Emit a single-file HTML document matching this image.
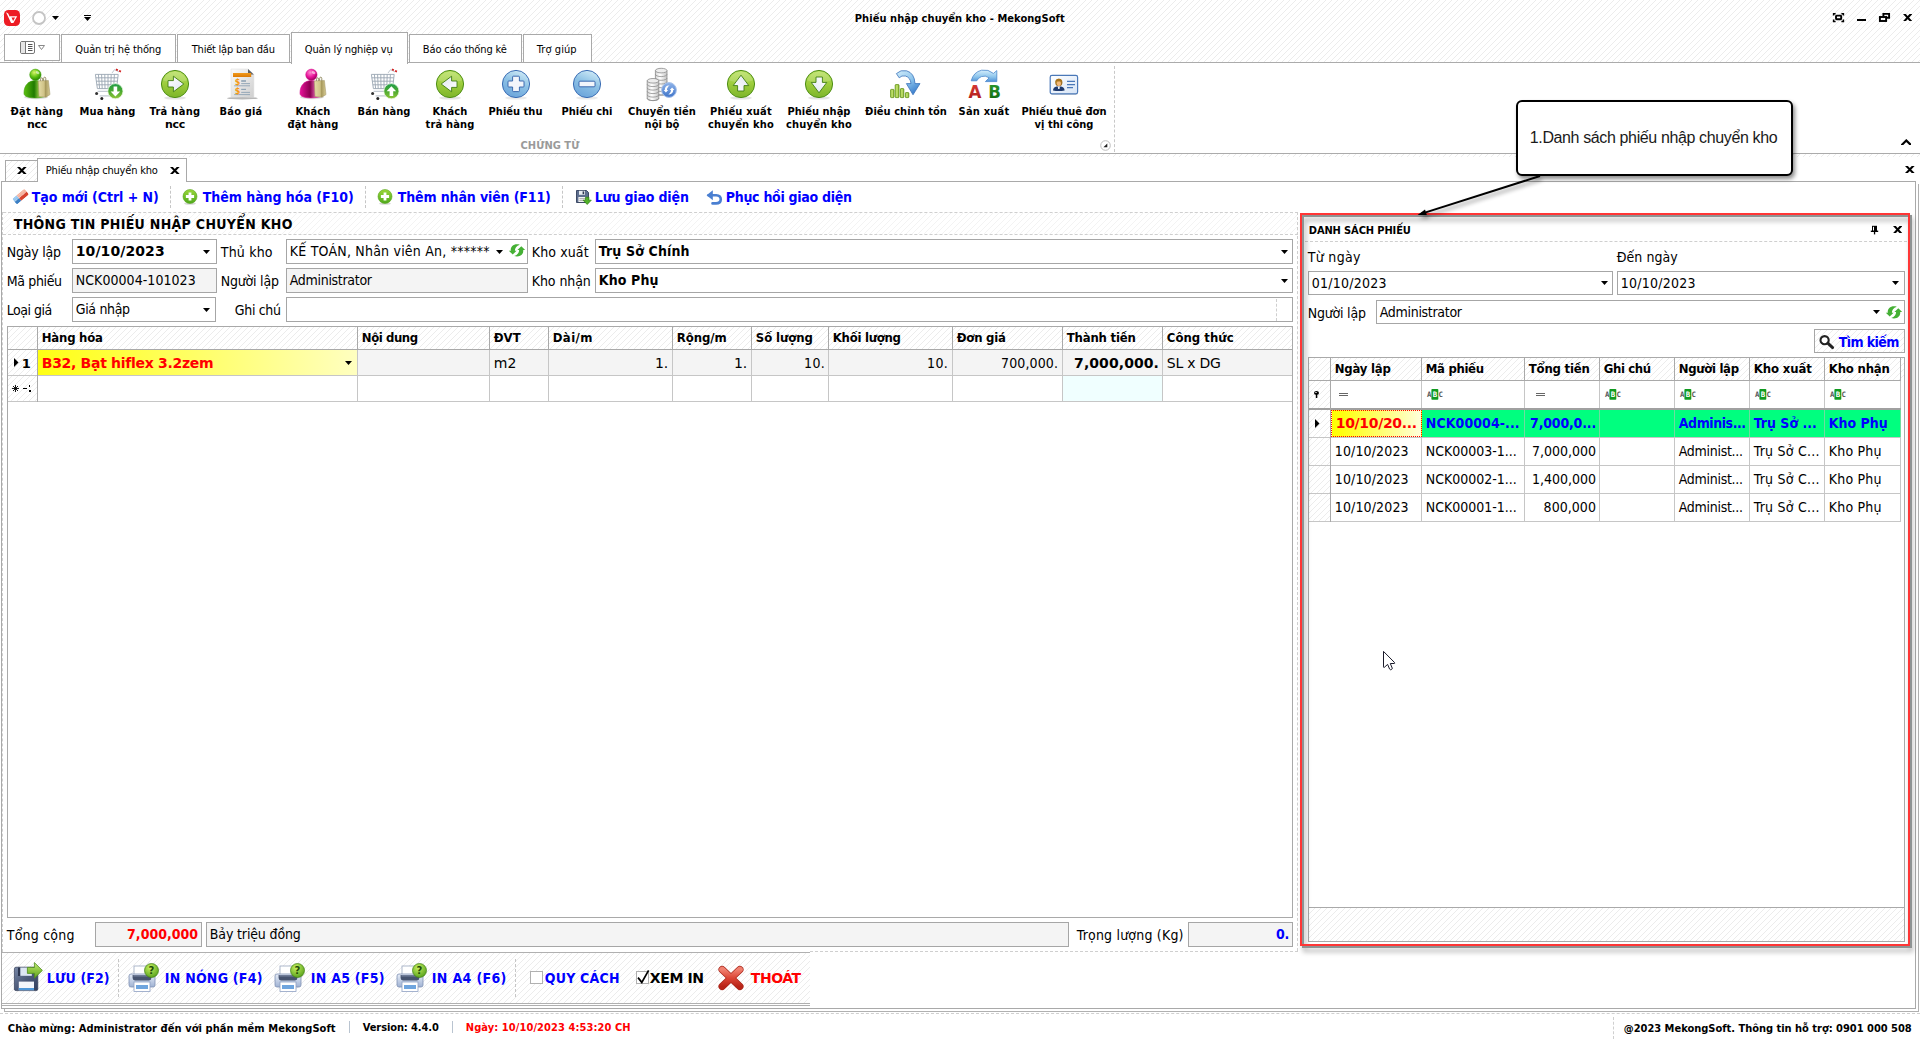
<!DOCTYPE html>
<html lang="vi"><head><meta charset="utf-8"><title>Phiếu nhập chuyển kho - MekongSoft</title>
<style>
html,body{margin:0;padding:0}
body{width:1920px;height:1039px;position:relative;overflow:hidden;background:#fff;font-family:"DejaVu Sans Condensed","Liberation Sans",sans-serif;font-size:11px;color:#000}
.t{position:absolute;white-space:pre;line-height:20px;height:20px}
.b{position:absolute;box-sizing:border-box}
.h{background-color:#fff;background-image:repeating-linear-gradient(135deg,#ececec 0,#ececec .65px,rgba(255,255,255,0) .65px,rgba(255,255,255,0) 4.2426px)}
svg{position:absolute;overflow:visible}
.h2{background-color:#fff;background-image:repeating-linear-gradient(135deg,#f3f3f3 0,#f3f3f3 .7px,rgba(255,255,255,0) .7px,rgba(255,255,255,0) 4.2426px)}

</style></head>
<body>
<div class="b h" style="left:0px;top:0px;width:1920px;height:62px;"></div>
<div class="b" style="left:0px;top:62px;width:1920px;height:1px;background:#ababab;"></div>
<svg style="left:4px;top:10px" width="16" height="16" viewBox="0 0 16 16"><rect x="0" y="0" width="16" height="16" rx="4.5" fill="#ed1c24"/><path d="M2 2.2L4.2 3.4L8.6 12.8H7Z" fill="#fff"/><path d="M5.4 6.2H13.2L9.4 13H7.2Z" fill="#fff"/><path d="M7.5 7.5H11.1L9.1 11.1Z" fill="#ed1c24"/></svg>
<svg style="left:31px;top:10px" width="16" height="16" viewBox="0 0 16 16"><circle cx="8" cy="8" r="6" fill="#fff" stroke="#c4c4c4" stroke-width="1.8"/></svg>
<svg style="left:52px;top:16px" width="8" height="5" viewBox="0 0 8 5"><path d="M0 0H7L3.5 4Z" fill="#000"/></svg>
<svg style="left:84px;top:14px" width="8" height="8" viewBox="0 0 8 8"><rect x="0" y="1" width="7" height="1" fill="#000"/><path d="M0 3H7L3.5 7Z" fill="#000"/></svg>
<span class="t" style="left:854.80px;top:9.00px;font-size:11px;font-weight:700;letter-spacing:0.057px;">Phiếu nhập chuyển kho - MekongSoft</span>
<svg style="left:1832px;top:12px" width="13" height="11" viewBox="0 0 13 11" fill="none" stroke="#000"><path d="M1.6 3.6V1.8H3.6M9.4 1.8H11.4V3.6M11.4 7.6V9.4H9.4M3.6 9.4H1.6V7.6" stroke-width="1.5"/><rect x="4" y="3.6" width="5.2" height="3.6" rx="0.6" stroke-width="1.9"/></svg>
<div class="b" style="left:1857px;top:19px;width:9px;height:2px;background:#000;"></div>
<svg style="left:1878px;top:12px" width="13" height="11" viewBox="0 0 13 11" fill="none" stroke="#000" stroke-width="1.9"><path d="M5.4 4V1.9H11.1V5.8H8.6"/><rect x="1.9" y="5" width="6.2" height="4" /></svg>
<svg style="left:1903px;top:14px;overflow:hidden" width="9.4" height="7.2" viewBox="0 0 9.4 7.2" stroke="#000" stroke-width="2.1"><path d="M-0.43 -2L9.83 9.2M9.83 -2L-0.43 9.2"/></svg>
<div class="b" style="left:4px;top:34px;width:56px;height:27px;background:#fff;border:1px solid #a9a9a9;"></div>
<svg style="left:20px;top:41px" width="28" height="14" viewBox="0 0 28 14" fill="none"><rect x="0.5" y="0.5" width="14" height="12" rx="1.5" stroke="#777" fill="#fff"/><rect x="1" y="1" width="4" height="11" fill="#e6e6e6"/><path d="M5.5 0.5V12.5" stroke="#777"/><path d="M8 3.5H12.5M8 5.5H12.5M8 7.5H12.5M8 9.5H12.5" stroke="#555"/><path d="M18.5 4.5H24.5L21.5 8.5Z" stroke="#888" fill="#fff"/></svg>
<div class="b" style="left:61px;top:34px;width:115px;height:28px;background:#fff;border:1px solid #a9a9a9;border-bottom:none;"></div>
<span class="t" style="left:75.30px;top:40.00px;font-size:11px;letter-spacing:-0.103px;">Quản trị hệ thống</span>
<div class="b" style="left:177px;top:34px;width:113px;height:28px;background:#fff;border:1px solid #a9a9a9;border-bottom:none;"></div>
<span class="t" style="left:191.80px;top:40.00px;font-size:11px;letter-spacing:-0.230px;">Thiết lập ban đầu</span>
<div class="b" style="left:291px;top:32px;width:117px;height:32px;background:#fff;border:1px solid #a9a9a9;border-bottom:none;"></div>
<span class="t" style="left:304.80px;top:40.00px;font-size:11px;letter-spacing:-0.154px;">Quản lý nghiệp vụ</span>
<div class="b" style="left:409px;top:34px;width:113px;height:28px;background:#fff;border:1px solid #a9a9a9;border-bottom:none;"></div>
<span class="t" style="left:422.80px;top:40.00px;font-size:11px;letter-spacing:-0.137px;">Báo cáo thống kê</span>
<div class="b" style="left:523px;top:34px;width:69px;height:28px;background:#fff;border:1px solid #a9a9a9;border-bottom:none;"></div>
<span class="t" style="left:536.80px;top:40.00px;font-size:11px;letter-spacing:0.077px;">Trợ giúp</span>
<div class="b" style="left:0px;top:153px;width:1920px;height:1px;background:#ababab;"></div>
<div class="b h" style="left:0px;top:154px;width:1920px;height:3px;"></div>
<div class="b" style="left:1114px;top:66px;width:0;height:86px;border-left:1px dashed #c8c8c8"></div>
<span class="t" style="left:520.55px;top:135.50px;font-size:11px;font-weight:700;color:#9a9a9a;letter-spacing:0.027px;">CHỨNG TỪ</span>
<svg style="left:1100px;top:140px" width="11" height="11" viewBox="0 0 11 11"><circle cx="5.5" cy="5.5" r="4.8" fill="#fff" stroke="#bdbdbd"/><path d="M7.3 3.4V7.3H3.4Z" fill="#222"/></svg>
<svg style="left:1900.6px;top:139.4px;overflow:hidden" width="10.6" height="5.8" viewBox="0 0 10.6 5.8" fill="none" stroke="#000" stroke-width="2.2"><path d="M-1 7.7L5.3 1.5L11.6 7.7" stroke-linejoin="miter"/></svg>
<span class="t" style="left:10.55px;top:102.00px;font-size:11px;font-weight:700;letter-spacing:0.237px;">Đặt hàng</span>
<span class="t" style="left:27.05px;top:115.00px;font-size:11px;font-weight:700;font-family:DejaVu Sans,Liberation Sans,sans-serif;letter-spacing:-0.325px;">ncc</span>
<svg style="left:21px;top:68px" width="32" height="32" viewBox="0 0 32 32"><defs><radialGradient id="i1a" cx="0.4" cy="0.3" r="0.75"><stop offset="0" stop-color="#d8f56a"/><stop offset="0.55" stop-color="#5cc010"/><stop offset="1" stop-color="#1f7a00"/></radialGradient>
<linearGradient id="i1b" x1="0" y1="0" x2="1" y2="0"><stop offset="0" stop-color="#5cc010"/><stop offset="0.45" stop-color="#1f7a00"/><stop offset="0.8" stop-color="#d8f56a"/><stop offset="1" stop-color="#5cc010"/></linearGradient>
<linearGradient id="i1c" x1="0" y1="0" x2="1" y2="0"><stop offset="0" stop-color="#e6dca8"/><stop offset="0.5" stop-color="#cfc286"/><stop offset="0.62" stop-color="#a89a5e"/><stop offset="1" stop-color="#d9cd96"/></linearGradient></defs>
<ellipse cx="15" cy="29.2" rx="12" ry="2" fill="#000" opacity="0.13"/>
<path d="M3 25C3 17 8 12.6 14.5 12.6C20 12.6 24.5 16 25.5 22L25.5 28C19 30.5 8 30.5 4.5 28C3.4 27.2 3 26.2 3 25Z" fill="url(#i1b)" stroke="#3a9a08" stroke-width="0.6"/>
<circle cx="14.4" cy="6.8" r="5.7" fill="url(#i1a)" stroke="#3a9a08" stroke-width="0.5"/>
<ellipse cx="16.6" cy="4.6" rx="2" ry="1.4" fill="#fff" opacity="0.55" transform="rotate(30 16.6 4.6)"/>
<path d="M19.6 13.6V11.2Q19.6 9.8 20.6 9.8Q21.6 9.8 21.6 11.2V13.6M22.6 13.6V10.6Q22.6 9.2 23.7 9.2Q24.8 9.2 24.8 10.6V13.6" fill="none" stroke="#8b8458" stroke-width="0.9"/>
<path d="M17.3 13L27.4 12.4L29 26.6L25 29.2L18 28.6Z" fill="url(#i1c)" stroke="#9c9060" stroke-width="0.5"/></svg>
<span class="t" style="left:79.55px;top:102.00px;font-size:11px;font-weight:700;letter-spacing:0.128px;">Mua hàng</span>
<svg style="left:92px;top:68px" width="32" height="32" viewBox="0 0 32 32"><defs><linearGradient id="i2g" x1="0" y1="0" x2="0" y2="1"><stop offset="0" stop-color="#1f9d4a"/><stop offset="0.5" stop-color="#4aa82e"/><stop offset="1" stop-color="#8fc63a"/></linearGradient></defs>
<g fill="none" stroke="#9aa6b2" stroke-width="0.9"><path d="M3.4 6.4H26.2L24.6 20.6H5.4Z"/><path d="M6.4 6.4L7.6 20.6M9.6 6.4L10.2 20.6M12.8 6.4L13 20.6M16 6.4V20.6M19.2 6.4L18.8 20.6M22.4 6.4L21.6 20.6"/><path d="M3.8 9.8H25.8M4.3 13.2H25.4M4.8 16.8H25"/><path d="M20 5L22.6 1.6L27 4" stroke="#b8c0c8"/><path d="M5.6 23.4H22M7.6 27.8H22" stroke="#c3cad2" stroke-width="1.2"/></g>
<path d="M24 1.4L29.4 3.8" stroke="#d21f1f" stroke-width="1.8" stroke-dasharray="2 1.4" fill="none"/>
<circle cx="4.6" cy="25.4" r="1.5" fill="#333"/><circle cx="9.8" cy="30.4" r="1.5" fill="#222"/>
<circle cx="23.4" cy="23.2" r="7.6" fill="url(#i2g)" stroke="#eaf6e2" stroke-width="0.8"/>
<path d="M23.4 28.4L28.2 23.4H25.2V18.6H21.6V23.4H18.6Z" fill="#fff"/></svg>
<span class="t" style="left:149.55px;top:102.00px;font-size:11px;font-weight:700;letter-spacing:0.312px;">Trả hàng</span>
<span class="t" style="left:165.05px;top:115.00px;font-size:11px;font-weight:700;font-family:DejaVu Sans,Liberation Sans,sans-serif;letter-spacing:-0.325px;">ncc</span>
<svg style="left:159px;top:68px" width="32" height="32" viewBox="0 0 32 32"><defs><linearGradient id="i3g" x1="0" y1="0" x2="0" y2="1"><stop offset="0" stop-color="#b9e162"/><stop offset="0.5" stop-color="#9ccc3c"/><stop offset="1" stop-color="#7db52a"/></linearGradient><linearGradient id="i3w" x1="0" y1="0" x2="1" y2="1"><stop offset="0" stop-color="#ffffff"/><stop offset="1" stop-color="#dfe6f2"/></linearGradient></defs>
<ellipse cx="16" cy="30" rx="11" ry="1.6" fill="#000" opacity="0.10"/>
<circle cx="16" cy="16" r="13.6" fill="url(#i3g)" stroke="#4f8f17" stroke-width="1"/>
<path d="M4.2 12.5A12.3 12.3 0 0 1 27.8 12.5Q16 16.5 4.2 12.5Z" fill="#fff" opacity="0.16"/><path d="M9 12.6H14.4V8.2L24.8 16L14.4 23.8V19H9Z" fill="url(#i3w)" stroke="#3f7d12" stroke-width="0.9" stroke-linejoin="miter" transform="rotate(0 16 16)"/></svg>
<span class="t" style="left:219.55px;top:102.00px;font-size:11px;font-weight:700;letter-spacing:0.182px;">Báo giá</span>
<svg style="left:225px;top:68px" width="32" height="32" viewBox="0 0 32 32"><defs><linearGradient id="i4p" x1="0" y1="0" x2="1" y2="1"><stop offset="0" stop-color="#fbfbfb"/><stop offset="1" stop-color="#cfcfcf"/></linearGradient><linearGradient id="i4o" x1="0" y1="0" x2="0" y2="1"><stop offset="0" stop-color="#f29a1c"/><stop offset="1" stop-color="#db7a06"/></linearGradient></defs>
<ellipse cx="17.4" cy="30.2" rx="15.4" ry="1.3" fill="#000" opacity="0.28"/>
<path d="M6 1H23L28.8 6.4V29H6Z" fill="url(#i4p)" stroke="#d8d8d8" stroke-width="0.5"/>
<path d="M23 1L28.8 6.4H23.4Q23 6.4 23 6Z" fill="#5a5f66"/>
<rect x="8" y="5" width="18.2" height="4" fill="url(#i4o)"/>
<g stroke="#8fa3b4" fill="none"><path d="M16.2 13H21" stroke-width="1.6"/><path d="M16.2 15.6H25M9.2 17.8H25" stroke-width="0.9"/><path d="M16.2 21.4H21" stroke-width="1.2"/><path d="M16.2 24.4H25M9.2 26.6H25" stroke-width="0.9"/></g>
<text x="12.6" y="16.8" font-family="DejaVu Sans,Liberation Sans,sans-serif" font-weight="700" font-size="8" text-anchor="middle" fill="#f59a12">$</text>
<text x="12.6" y="25.6" font-family="DejaVu Sans,Liberation Sans,sans-serif" font-weight="700" font-size="8" text-anchor="middle" fill="#f59a12">$</text></svg>
<span class="t" style="left:295.55px;top:102.00px;font-size:11px;font-weight:700;letter-spacing:0.117px;">Khách</span>
<span class="t" style="left:287.55px;top:115.00px;font-size:11px;font-weight:700;letter-spacing:0.138px;">đặt hàng</span>
<svg style="left:297px;top:68px" width="32" height="32" viewBox="0 0 32 32"><defs><radialGradient id="i5a" cx="0.4" cy="0.3" r="0.75"><stop offset="0" stop-color="#ff8ad0"/><stop offset="0.55" stop-color="#e8129a"/><stop offset="1" stop-color="#8a0050"/></radialGradient>
<linearGradient id="i5b" x1="0" y1="0" x2="1" y2="0"><stop offset="0" stop-color="#e8129a"/><stop offset="0.45" stop-color="#8a0050"/><stop offset="0.8" stop-color="#ff8ad0"/><stop offset="1" stop-color="#e8129a"/></linearGradient>
<linearGradient id="i5c" x1="0" y1="0" x2="1" y2="0"><stop offset="0" stop-color="#e6dca8"/><stop offset="0.5" stop-color="#cfc286"/><stop offset="0.62" stop-color="#a89a5e"/><stop offset="1" stop-color="#d9cd96"/></linearGradient></defs>
<ellipse cx="15" cy="29.2" rx="12" ry="2" fill="#000" opacity="0.13"/>
<path d="M3 25C3 17 8 12.6 14.5 12.6C20 12.6 24.5 16 25.5 22L25.5 28C19 30.5 8 30.5 4.5 28C3.4 27.2 3 26.2 3 25Z" fill="url(#i5b)" stroke="#d0108a" stroke-width="0.6"/>
<circle cx="14.4" cy="6.8" r="5.7" fill="url(#i5a)" stroke="#d0108a" stroke-width="0.5"/>
<ellipse cx="16.6" cy="4.6" rx="2" ry="1.4" fill="#fff" opacity="0.55" transform="rotate(30 16.6 4.6)"/>
<path d="M19.6 13.6V11.2Q19.6 9.8 20.6 9.8Q21.6 9.8 21.6 11.2V13.6M22.6 13.6V10.6Q22.6 9.2 23.7 9.2Q24.8 9.2 24.8 10.6V13.6" fill="none" stroke="#8b8458" stroke-width="0.9"/>
<path d="M17.3 13L27.4 12.4L29 26.6L25 29.2L18 28.6Z" fill="url(#i5c)" stroke="#9c9060" stroke-width="0.5"/></svg>
<span class="t" style="left:357.55px;top:102.00px;font-size:11px;font-weight:700;letter-spacing:0.042px;">Bán hàng</span>
<svg style="left:368px;top:68px" width="32" height="32" viewBox="0 0 32 32"><defs><linearGradient id="i6g" x1="0" y1="0" x2="0" y2="1"><stop offset="0" stop-color="#1f9d4a"/><stop offset="0.5" stop-color="#4aa82e"/><stop offset="1" stop-color="#8fc63a"/></linearGradient></defs>
<g fill="none" stroke="#9aa6b2" stroke-width="0.9"><path d="M3.4 6.4H26.2L24.6 20.6H5.4Z"/><path d="M6.4 6.4L7.6 20.6M9.6 6.4L10.2 20.6M12.8 6.4L13 20.6M16 6.4V20.6M19.2 6.4L18.8 20.6M22.4 6.4L21.6 20.6"/><path d="M3.8 9.8H25.8M4.3 13.2H25.4M4.8 16.8H25"/><path d="M20 5L22.6 1.6L27 4" stroke="#b8c0c8"/><path d="M5.6 23.4H22M7.6 27.8H22" stroke="#c3cad2" stroke-width="1.2"/></g>
<path d="M24 1.4L29.4 3.8" stroke="#d21f1f" stroke-width="1.8" stroke-dasharray="2 1.4" fill="none"/>
<circle cx="4.6" cy="25.4" r="1.5" fill="#333"/><circle cx="9.8" cy="30.4" r="1.5" fill="#222"/>
<circle cx="23.4" cy="23.2" r="7.6" fill="url(#i6g)" stroke="#eaf6e2" stroke-width="0.8"/>
<path d="M23.4 18.2L28.2 23.2H25.2V28H21.6V23.2H18.6Z" fill="#fff"/></svg>
<span class="t" style="left:432.55px;top:102.00px;font-size:11px;font-weight:700;letter-spacing:0.117px;">Khách</span>
<span class="t" style="left:425.55px;top:115.00px;font-size:11px;font-weight:700;letter-spacing:0.163px;">trả hàng</span>
<svg style="left:434px;top:68px" width="32" height="32" viewBox="0 0 32 32"><defs><linearGradient id="i7g" x1="0" y1="0" x2="0" y2="1"><stop offset="0" stop-color="#b9e162"/><stop offset="0.5" stop-color="#9ccc3c"/><stop offset="1" stop-color="#7db52a"/></linearGradient><linearGradient id="i7w" x1="0" y1="0" x2="1" y2="1"><stop offset="0" stop-color="#ffffff"/><stop offset="1" stop-color="#dfe6f2"/></linearGradient></defs>
<ellipse cx="16" cy="30" rx="11" ry="1.6" fill="#000" opacity="0.10"/>
<circle cx="16" cy="16" r="13.6" fill="url(#i7g)" stroke="#4f8f17" stroke-width="1"/>
<path d="M4.2 12.5A12.3 12.3 0 0 1 27.8 12.5Q16 16.5 4.2 12.5Z" fill="#fff" opacity="0.16"/><path d="M9 12.6H14.4V8.2L24.8 16L14.4 23.8V19H9Z" fill="url(#i7w)" stroke="#3f7d12" stroke-width="0.9" stroke-linejoin="miter" transform="rotate(180 16 16)"/></svg>
<span class="t" style="left:488.55px;top:102.00px;font-size:11px;font-weight:700;letter-spacing:0.020px;">Phiếu thu</span>
<svg style="left:500px;top:68px" width="32" height="32" viewBox="0 0 32 32"><defs><linearGradient id="i8g" x1="0.7" y1="0" x2="0.3" y2="1"><stop offset="0" stop-color="#cfeaf6"/><stop offset="0.45" stop-color="#8fc3e6"/><stop offset="1" stop-color="#6aa3da"/></linearGradient></defs>
<ellipse cx="16" cy="30" rx="11" ry="1.6" fill="#000" opacity="0.08"/>
<circle cx="16" cy="16" r="13.6" fill="url(#i8g)" stroke="#3b6db4" stroke-width="1"/><path d="M13.4 8.2H18.6Q19.4 8.2 19.4 9V13H23.2Q24 13 24 13.8V18.2Q24 19 23.2 19H19.4V22.8Q19.4 23.6 18.6 23.6H13.4Q12.6 23.6 12.6 22.8V19H8.8Q8 19 8 18.2V13.8Q8 13 8.8 13H12.6V9Q12.6 8.2 13.4 8.2Z" fill="#f2f5fb" stroke="#2f5fa8" stroke-width="0.9"/></svg>
<span class="t" style="left:561.55px;top:102.00px;font-size:11px;font-weight:700;letter-spacing:-0.034px;">Phiếu chi</span>
<svg style="left:571px;top:68px" width="32" height="32" viewBox="0 0 32 32"><defs><linearGradient id="i9g" x1="0.7" y1="0" x2="0.3" y2="1"><stop offset="0" stop-color="#cfeaf6"/><stop offset="0.45" stop-color="#8fc3e6"/><stop offset="1" stop-color="#6aa3da"/></linearGradient></defs>
<ellipse cx="16" cy="30" rx="11" ry="1.6" fill="#000" opacity="0.08"/>
<circle cx="16" cy="16" r="13.6" fill="url(#i9g)" stroke="#3b6db4" stroke-width="1"/><rect x="8" y="13.2" width="16" height="5.6" rx="0.9" fill="#f2f5fb" stroke="#2f5fa8" stroke-width="0.9"/></svg>
<span class="t" style="left:628.05px;top:102.00px;font-size:11px;font-weight:700;letter-spacing:0.090px;">Chuyển tiền</span>
<span class="t" style="left:644.55px;top:115.00px;font-size:11px;font-weight:700;letter-spacing:0.054px;">nội bộ</span>
<svg style="left:646px;top:68px" width="32" height="32" viewBox="0 0 32 32"><defs><linearGradient id="i10s" x1="0" y1="0" x2="1" y2="0"><stop offset="0" stop-color="#d6d6d6"/><stop offset="0.4" stop-color="#ffffff"/><stop offset="1" stop-color="#c4c4c4"/></linearGradient><linearGradient id="i10b" x1="0" y1="0" x2="0" y2="1"><stop offset="0" stop-color="#8fb4ea"/><stop offset="1" stop-color="#3f74c8"/></linearGradient></defs>
<path d="M9.4 2.6V24.800000000000004A5.8 2.3 0 0 0 21.0 24.800000000000004V2.6Z" fill="url(#i10s)" stroke="#8a8a8a" stroke-width="0.8"/><path d="M9.4 6.300000000000001A5.8 2.3 0 0 0 21.0 6.300000000000001" fill="none" stroke="#8e8e8e" stroke-width="0.8"/><path d="M9.4 10.0A5.8 2.3 0 0 0 21.0 10.0" fill="none" stroke="#8e8e8e" stroke-width="0.8"/><path d="M9.4 13.700000000000001A5.8 2.3 0 0 0 21.0 13.700000000000001" fill="none" stroke="#8e8e8e" stroke-width="0.8"/><path d="M9.4 17.400000000000002A5.8 2.3 0 0 0 21.0 17.400000000000002" fill="none" stroke="#8e8e8e" stroke-width="0.8"/><path d="M9.4 21.1A5.8 2.3 0 0 0 21.0 21.1" fill="none" stroke="#8e8e8e" stroke-width="0.8"/><path d="M9.4 24.800000000000004A5.8 2.3 0 0 0 21.0 24.800000000000004" fill="none" stroke="#8e8e8e" stroke-width="0.8"/><ellipse cx="15.2" cy="2.6" rx="5.8" ry="2.3" fill="#ededed" stroke="#8a8a8a" stroke-width="0.8"/><path d="M1.2 12.8V30.3A5.8 2.3 0 0 0 12.799999999999999 30.3V12.8Z" fill="url(#i10s)" stroke="#8a8a8a" stroke-width="0.8"/><path d="M1.2 16.3A5.8 2.3 0 0 0 12.799999999999999 16.3" fill="none" stroke="#8e8e8e" stroke-width="0.8"/><path d="M1.2 19.8A5.8 2.3 0 0 0 12.799999999999999 19.8" fill="none" stroke="#8e8e8e" stroke-width="0.8"/><path d="M1.2 23.3A5.8 2.3 0 0 0 12.799999999999999 23.3" fill="none" stroke="#8e8e8e" stroke-width="0.8"/><path d="M1.2 26.8A5.8 2.3 0 0 0 12.799999999999999 26.8" fill="none" stroke="#8e8e8e" stroke-width="0.8"/><path d="M1.2 30.3A5.8 2.3 0 0 0 12.799999999999999 30.3" fill="none" stroke="#8e8e8e" stroke-width="0.8"/><ellipse cx="7.0" cy="12.8" rx="5.8" ry="2.3" fill="#ededed" stroke="#8a8a8a" stroke-width="0.8"/>
<circle cx="23" cy="22" r="7.4" fill="url(#i10b)" stroke="#a9c3ec" stroke-width="1"/>
<g fill="#fff"><path d="M23.6 17.6C20.6 17.2 18.6 19.4 18.8 22L17.6 22L19.9 24.4L22.2 21.9L21 21.9C21 20.2 22 18.6 23.6 17.6Z"/><path d="M23.6 17.6C20.6 17.2 18.6 19.4 18.8 22L17.6 22L19.9 24.4L22.2 21.9L21 21.9C21 20.2 22 18.6 23.6 17.6Z" transform="rotate(180 23 22)"/></g></svg>
<span class="t" style="left:710.05px;top:102.00px;font-size:11px;font-weight:700;letter-spacing:0.217px;">Phiếu xuất</span>
<span class="t" style="left:708.05px;top:115.00px;font-size:11px;font-weight:700;letter-spacing:0.185px;">chuyển kho</span>
<svg style="left:725px;top:68px" width="32" height="32" viewBox="0 0 32 32"><defs><linearGradient id="i11g" x1="0" y1="0" x2="0" y2="1"><stop offset="0" stop-color="#b9e162"/><stop offset="0.5" stop-color="#9ccc3c"/><stop offset="1" stop-color="#7db52a"/></linearGradient><linearGradient id="i11w" x1="0" y1="0" x2="1" y2="1"><stop offset="0" stop-color="#ffffff"/><stop offset="1" stop-color="#dfe6f2"/></linearGradient></defs>
<ellipse cx="16" cy="30" rx="11" ry="1.6" fill="#000" opacity="0.10"/>
<circle cx="16" cy="16" r="13.6" fill="url(#i11g)" stroke="#4f8f17" stroke-width="1"/>
<path d="M4.2 12.5A12.3 12.3 0 0 1 27.8 12.5Q16 16.5 4.2 12.5Z" fill="#fff" opacity="0.16"/><path d="M9 12.6H14.4V8.2L24.8 16L14.4 23.8V19H9Z" fill="url(#i11w)" stroke="#3f7d12" stroke-width="0.9" stroke-linejoin="miter" transform="rotate(-90 16 16)"/></svg>
<span class="t" style="left:787.55px;top:102.00px;font-size:11px;font-weight:700;letter-spacing:0.015px;">Phiếu nhập</span>
<span class="t" style="left:786.05px;top:115.00px;font-size:11px;font-weight:700;letter-spacing:0.185px;">chuyển kho</span>
<svg style="left:803px;top:68px" width="32" height="32" viewBox="0 0 32 32"><defs><linearGradient id="i12g" x1="0" y1="0" x2="0" y2="1"><stop offset="0" stop-color="#b9e162"/><stop offset="0.5" stop-color="#9ccc3c"/><stop offset="1" stop-color="#7db52a"/></linearGradient><linearGradient id="i12w" x1="0" y1="0" x2="1" y2="1"><stop offset="0" stop-color="#ffffff"/><stop offset="1" stop-color="#dfe6f2"/></linearGradient></defs>
<ellipse cx="16" cy="30" rx="11" ry="1.6" fill="#000" opacity="0.10"/>
<circle cx="16" cy="16" r="13.6" fill="url(#i12g)" stroke="#4f8f17" stroke-width="1"/>
<path d="M4.2 12.5A12.3 12.3 0 0 1 27.8 12.5Q16 16.5 4.2 12.5Z" fill="#fff" opacity="0.16"/><path d="M9 12.6H14.4V8.2L24.8 16L14.4 23.8V19H9Z" fill="url(#i12w)" stroke="#3f7d12" stroke-width="0.9" stroke-linejoin="miter" transform="rotate(90 16 16)"/></svg>
<span class="t" style="left:865.05px;top:102.00px;font-size:11px;font-weight:700;letter-spacing:0.042px;">Điều chỉnh tồn</span>
<svg style="left:890px;top:68px" width="32" height="32" viewBox="0 0 32 32"><defs><linearGradient id="i13g" x1="0" y1="0" x2="1" y2="0"><stop offset="0" stop-color="#a7d146"/><stop offset="0.5" stop-color="#c3e272"/><stop offset="1" stop-color="#7fae22"/></linearGradient><linearGradient id="i13b" x1="0" y1="0" x2="0.6" y2="1"><stop offset="0" stop-color="#d4eefb"/><stop offset="0.55" stop-color="#8cc4ec"/><stop offset="1" stop-color="#3f82cf"/></linearGradient></defs>
<g fill="url(#i13g)" stroke="#5f8f14" stroke-width="0.8"><rect x="0.6" y="21.4" width="3.4" height="8.2" rx="0.6"/><rect x="5.2" y="16.6" width="3.8" height="13" rx="0.6"/><rect x="10.4" y="20.6" width="3.4" height="9" rx="0.6"/><rect x="15.4" y="24.6" width="3.4" height="5" rx="0.6"/></g>
<path d="M6.4 5.6Q10.6 1.4 16.6 2.8Q24.4 5 25 15.6L30 15.6L23 26.8L16.4 15.6L21 15.6Q20.4 9.4 15.4 8Q11.6 7.2 9.2 9.8Z" fill="url(#i13b)" stroke="#3a72ba" stroke-width="0.8" stroke-linejoin="round"/></svg>
<span class="t" style="left:958.55px;top:102.00px;font-size:11px;font-weight:700;letter-spacing:0.220px;">Sản xuất</span>
<svg style="left:968px;top:68px" width="32" height="32" viewBox="0 0 32 32"><defs><linearGradient id="i14b" x1="0" y1="0" x2="0" y2="1"><stop offset="0" stop-color="#d8f0fc"/><stop offset="0.6" stop-color="#8cc4ec"/><stop offset="1" stop-color="#4f90d6"/></linearGradient><linearGradient id="i14r" x1="0" y1="0" x2="0" y2="1"><stop offset="0" stop-color="#e0403a"/><stop offset="1" stop-color="#a81818"/></linearGradient><linearGradient id="i14n" x1="0" y1="0" x2="0" y2="1"><stop offset="0" stop-color="#2fa02f"/><stop offset="1" stop-color="#0e640e"/></linearGradient></defs>
<path d="M3.2 12.8Q5.4 4.2 13.6 2.2Q20.4 1 25.4 5.4L28.8 2.6V13.6H17.4L21.2 9.8Q17.4 7.2 13.4 8.6Q10 10 8.8 12.8Z" fill="url(#i14b)" stroke="#4a86cc" stroke-width="0.8" stroke-linejoin="round"/>
<text x="7" y="29.8" font-family="DejaVu Sans Condensed,Liberation Sans,sans-serif" font-weight="700" font-size="18.5" text-anchor="middle" fill="url(#i14r)">A</text>
<text x="26.6" y="29.8" font-family="DejaVu Sans Condensed,Liberation Sans,sans-serif" font-weight="700" font-size="18.5" text-anchor="middle" fill="url(#i14n)">B</text></svg>
<span class="t" style="left:1021.55px;top:102.00px;font-size:11px;font-weight:700;letter-spacing:0.006px;">Phiếu thuê đơn</span>
<span class="t" style="left:1034.55px;top:115.00px;font-size:11px;font-weight:700;letter-spacing:0.018px;">vị thi công</span>
<svg style="left:1048px;top:68px" width="32" height="32" viewBox="0 0 32 32"><defs><linearGradient id="i15c" x1="0" y1="0" x2="1" y2="1"><stop offset="0" stop-color="#ffffff"/><stop offset="1" stop-color="#d6e4f6"/></linearGradient><radialGradient id="i15h" cx="0.4" cy="0.3" r="0.8"><stop offset="0" stop-color="#d9a848"/><stop offset="1" stop-color="#8a5a10"/></radialGradient></defs>
<rect x="2.6" y="8.6" width="27.4" height="18.4" rx="1.8" fill="#000" opacity="0.12"/>
<rect x="2.2" y="7.4" width="27.4" height="18.4" rx="1.8" fill="url(#i15c)" stroke="#4a78b8" stroke-width="1.2"/>
<path d="M5 22.4Q5.2 19 8.6 18.4L13 18.4Q16.4 19 16.6 22.4Q10.8 23.6 5 22.4Z" fill="#1f3a6e"/>
<path d="M9.8 18.4H11.9L11.5 21H10.2Z" fill="#f4f4f4"/>
<circle cx="10.8" cy="14.4" r="3.6" fill="url(#i15h)"/>
<ellipse cx="10.9" cy="15.6" rx="2.1" ry="2.6" fill="#f3b878"/>
<path d="M7.4 14.2Q8 10.6 11 10.8Q14 11 14.2 14.2Q12.4 12.8 10.6 13.4Q8.8 13.2 7.4 14.2Z" fill="#a8721a"/>
<path d="M19 13.4H27M19 16.6H27M19 19.6H25" stroke="#4a78b8" stroke-width="1.1" fill="none"/></svg>
<div class="b h" style="left:5px;top:160px;width:33px;height:22px;border:1px solid #a9a9a9;border-bottom:none;"></div>
<svg style="left:17px;top:167px;overflow:hidden" width="9.6" height="7" viewBox="0 0 9.6 7" stroke="#000" stroke-width="2.1"><path d="M-0.54 -2L10.14 9M10.14 -2L-0.54 9"/></svg>
<div class="b" style="left:1px;top:181px;width:1915px;height:828px;background:#fff;border:1px solid #a9a9a9;"></div>
<div class="b" style="left:4px;top:184px;width:1915px;height:828px;border:1px solid #b0b0b0;border-top:none;border-left:none;"></div>
<div class="b" style="left:4px;top:1009px;width:1px;height:3px;background:#b0b0b0;"></div>
<div class="b" style="left:37px;top:158px;width:150px;height:24px;background:#fff;border:1px solid #a9a9a9;border-bottom:none;"></div>
<span class="t" style="left:45.80px;top:161.00px;font-size:11px;letter-spacing:-0.193px;">Phiếu nhập chuyển kho</span>
<svg style="left:170px;top:167px;overflow:hidden" width="9.6" height="7" viewBox="0 0 9.6 7" stroke="#000" stroke-width="2.1"><path d="M-0.54 -2L10.14 9M10.14 -2L-0.54 9"/></svg>
<svg style="left:1905px;top:166px;overflow:hidden" width="9.6" height="7" viewBox="0 0 9.6 7" stroke="#000" stroke-width="2.1"><path d="M-0.54 -2L10.14 9M10.14 -2L-0.54 9"/></svg>
<span class="t" style="left:31.80px;top:187.00px;font-size:14px;font-weight:700;color:#0000ff;letter-spacing:-0.048px;">Tạo mới (Ctrl + N)</span>
<span class="t" style="left:202.80px;top:187.00px;font-size:14px;font-weight:700;color:#0000ff;letter-spacing:-0.037px;">Thêm hàng hóa (F10)</span>
<span class="t" style="left:397.80px;top:187.00px;font-size:14px;font-weight:700;color:#0000ff;letter-spacing:-0.128px;">Thêm nhân viên (F11)</span>
<span class="t" style="left:594.80px;top:187.00px;font-size:14px;font-weight:700;color:#0000ff;letter-spacing:-0.166px;">Lưu giao diện</span>
<span class="t" style="left:725.80px;top:187.00px;font-size:14px;font-weight:700;color:#0000ff;letter-spacing:-0.286px;">Phục hồi giao diện</span>
<div class="b" style="left:170px;top:186px;width:0;height:22px;border-left:1px dashed #c6c6c6"></div>
<div class="b" style="left:365px;top:186px;width:0;height:22px;border-left:1px dashed #c6c6c6"></div>
<div class="b" style="left:562px;top:186px;width:0;height:22px;border-left:1px dashed #c6c6c6"></div>
<svg style="left:182px;top:189px" width="16" height="16" viewBox="0 0 16 16"><defs><linearGradient id="pg182" x1="0" y1="0" x2="0" y2="1"><stop offset="0" stop-color="#9bd83a"/><stop offset="1" stop-color="#4ea81b"/></linearGradient></defs><ellipse cx="8" cy="14.6" rx="6" ry="1.2" fill="#d8d8d8"/><circle cx="8" cy="7.5" r="7" fill="url(#pg182)" stroke="#5aa520" stroke-width="0.6"/><path d="M6.6 3.4h2.8v2.7h2.7v2.8H9.4v2.7H6.6V8.9H3.9V6.1h2.7z" fill="#fff"/></svg>
<svg style="left:377px;top:189px" width="16" height="16" viewBox="0 0 16 16"><defs><linearGradient id="pg377" x1="0" y1="0" x2="0" y2="1"><stop offset="0" stop-color="#9bd83a"/><stop offset="1" stop-color="#4ea81b"/></linearGradient></defs><ellipse cx="8" cy="14.6" rx="6" ry="1.2" fill="#d8d8d8"/><circle cx="8" cy="7.5" r="7" fill="url(#pg377)" stroke="#5aa520" stroke-width="0.6"/><path d="M6.6 3.4h2.8v2.7h2.7v2.8H9.4v2.7H6.6V8.9H3.9V6.1h2.7z" fill="#fff"/></svg>
<svg style="left:12px;top:189px" width="18" height="16" viewBox="0 0 18 16"><defs><clipPath id="erc"><rect x="-8" y="-3.7" width="16" height="7.4" rx="1.8"/></clipPath></defs><g transform="translate(8.6 7.6) rotate(-40)"><g clip-path="url(#erc)"><rect x="-8" y="-3.7" width="5.8" height="3.8" fill="#93c5ef"/><rect x="-8" y="0" width="5.8" height="3.7" fill="#3b7fc4"/><rect x="-2.2" y="-3.7" width="10.2" height="3.8" fill="#f6b29c"/><rect x="-2.2" y="0" width="10.2" height="3.7" fill="#d7432d"/></g><path d="M-7.4 0H7.4" stroke="#fff" stroke-width="0.7" stroke-dasharray="0.9 0.9" opacity=".85"/><path d="M-7 -2.3H6.6" stroke="#fff" stroke-width="0.6" stroke-dasharray="0.9 0.9" opacity=".5"/></g></svg>
<svg style="left:576px;top:189px" width="16" height="16" viewBox="0 0 16 16"><path d="M0.5 1.5H10.5L12.5 3.5V13.5H0.5Z" fill="#5d6e8e" stroke="#3d4a66"/><rect x="3" y="1.8" width="6" height="4" fill="#e9edf2"/><rect x="6.6" y="2.4" width="1.6" height="2.8" fill="#2e3850"/><rect x="2.4" y="8" width="8" height="5" fill="#f4f4f4"/><path d="M3.4 9.6H9.4M3.4 11.4H9.4" stroke="#999" stroke-width="0.8"/><path d="M9.5 8.2h3.4v3h2.4l-4.1 4.3l-4.1-4.3h2.4z" fill="#52b22a" stroke="#2f7d12" stroke-width="0.7"/></svg>
<svg style="left:706px;top:190px" width="17" height="15" viewBox="0 0 17 15" fill="none"><path d="M2.5 5.2H10.2Q14.8 5.4 14.8 9.4Q14.6 13.4 10 13.4H6.5" stroke="#4a7fd1" stroke-width="2.6" stroke-linecap="round"/><path d="M6.8 0.2L0.6 5.2L6.8 10.2Z" fill="#4a7fd1"/></svg>
<div class="b h2" style="left:3px;top:212px;width:1295px;height:23px;border:1px dashed #cfcfcf;border-left:none"></div>
<span class="t" style="left:13.80px;top:214.00px;font-size:14px;font-weight:700;letter-spacing:0.317px;">THÔNG TIN PHIẾU NHẬP CHUYỂN KHO</span>
<div class="b" style="left:2px;top:212px;width:0;height:740px;border-left:1px dashed #cfcfcf"></div>
<span class="t" style="left:6.80px;top:242.00px;font-size:14px;letter-spacing:-0.239px;">Ngày lập</span>
<div class="b" style="left:72px;top:239px;width:145px;height:25px;background:#fff;border:1px solid #a6a6a6;"></div>
<span class="t" style="left:75.80px;top:241.00px;font-size:14px;font-weight:700;font-family:DejaVu Sans,Liberation Sans,sans-serif;letter-spacing:0.074px;">10/10/2023</span>
<svg style="left:203px;top:250px" width="7" height="4" viewBox="0 0 7 4"><path d="M0 0H7L3.5 4Z" fill="#000"/></svg>
<span class="t" style="left:220.80px;top:242.00px;font-size:14px;letter-spacing:0.180px;">Thủ kho</span>
<div class="b" style="left:286px;top:239px;width:242px;height:25px;background:#fff;border:1px solid #a6a6a6;"></div>
<span class="t" style="left:289.80px;top:241.00px;font-size:14px;letter-spacing:0.212px;">KẾ TOÁN, Nhân viên An, ******</span>
<svg style="left:496px;top:250px" width="7" height="4" viewBox="0 0 7 4"><path d="M0 0H7L3.5 4Z" fill="#000"/></svg>
<svg style="left:509px;top:244px" width="16" height="13" viewBox="0 0 16 13" fill="#45b035"><path id="ra" d="M10.8 0.8C5.6 -0.8 1.2 2.2 1.8 6.8L-0.2 6.8L3.7 10.6L7.6 6.8L5.9 6.8C5.8 4.2 7.4 2 10.8 0.8Z"/><path d="M10.8 0.8C5.6 -0.8 1.2 2.2 1.8 6.8L-0.2 6.8L3.7 10.6L7.6 6.8L5.9 6.8C5.8 4.2 7.4 2 10.8 0.8Z" transform="rotate(180 8 6.45)"/></svg>
<span class="t" style="left:531.80px;top:242.00px;font-size:14px;letter-spacing:0.107px;">Kho xuất</span>
<div class="b" style="left:595px;top:239px;width:698px;height:25px;background:#fff;border:1px solid #a6a6a6;"></div>
<span class="t" style="left:598.80px;top:241.00px;font-size:14px;font-weight:700;letter-spacing:0.141px;">Trụ Sở Chính</span>
<svg style="left:1281px;top:250px" width="7" height="4" viewBox="0 0 7 4"><path d="M0 0H7L3.5 4Z" fill="#000"/></svg>
<span class="t" style="left:6.80px;top:271.00px;font-size:14px;letter-spacing:-0.364px;">Mã phiếu</span>
<div class="b" style="left:72px;top:268px;width:145px;height:25px;background:#f4f4f4;border:1px solid #a6a6a6;"></div>
<span class="t" style="left:75.80px;top:270.00px;font-size:14px;letter-spacing:0.050px;">NCK00004-101023</span>
<span class="t" style="left:220.80px;top:271.00px;font-size:14px;letter-spacing:-0.214px;">Người lập</span>
<div class="b" style="left:286px;top:268px;width:242px;height:25px;background:#f4f4f4;border:1px solid #a6a6a6;"></div>
<span class="t" style="left:289.80px;top:270.00px;font-size:14px;letter-spacing:-0.302px;">Administrator</span>
<span class="t" style="left:531.80px;top:271.00px;font-size:14px;letter-spacing:-0.091px;">Kho nhận</span>
<div class="b" style="left:595px;top:268px;width:698px;height:25px;background:#fff;border:1px solid #a6a6a6;"></div>
<span class="t" style="left:598.80px;top:270.00px;font-size:14px;font-weight:700;letter-spacing:0.137px;">Kho Phụ</span>
<svg style="left:1281px;top:279px" width="7" height="4" viewBox="0 0 7 4"><path d="M0 0H7L3.5 4Z" fill="#000"/></svg>
<span class="t" style="left:6.80px;top:300.00px;font-size:14px;letter-spacing:-0.501px;">Loại giá</span>
<div class="b" style="left:72px;top:297px;width:144px;height:25px;background:#fff;border:1px solid #a6a6a6;"></div>
<span class="t" style="left:75.80px;top:299.00px;font-size:14px;letter-spacing:-0.346px;">Giá nhập</span>
<svg style="left:203px;top:308px" width="7" height="4" viewBox="0 0 7 4"><path d="M0 0H7L3.5 4Z" fill="#000"/></svg>
<span class="t" style="left:234.80px;top:300.00px;font-size:14px;letter-spacing:-0.320px;">Ghi chú</span>
<div class="b" style="left:286px;top:297px;width:1007px;height:25px;background:#fff;border:1px solid #a6a6a6;"></div>
<div class="b" style="left:1276px;top:299px;width:0;height:22px;border-left:1px dashed #cfcfcf"></div>
<div class="b" style="left:7px;top:326px;width:1286px;height:592px;background:#fff;border:1px solid #a9a9a9;"></div>
<div class="b h" style="left:8px;top:327px;width:1284px;height:22px;"></div>
<div class="b" style="left:8px;top:349px;width:1284px;height:1px;background:#a9a9a9;"></div>
<div class="b h" style="left:8px;top:350px;width:29px;height:51px;"></div>
<div class="b" style="left:38px;top:350px;width:1254px;height:25px;background:#f4f4f4;"></div>
<div class="b" style="left:38px;top:350px;width:319px;height:25px;background:linear-gradient(90deg,#ffff14 0%,#ffff70 55%,#ffffc0 100%);"></div>
<div class="b" style="left:1063px;top:376px;width:99px;height:25px;background:#f0ffff;"></div>
<div class="b" style="left:8px;top:375px;width:1284px;height:1px;background:#c6c6c6;"></div>
<div class="b" style="left:8px;top:401px;width:1284px;height:1px;background:#c6c6c6;"></div>
<div class="b" style="left:37px;top:327px;width:1px;height:23px;background:#a9a9a9;"></div>
<div class="b" style="left:37px;top:350px;width:1px;height:52px;background:#a9a9a9;"></div>
<div class="b" style="left:357px;top:327px;width:1px;height:23px;background:#a9a9a9;"></div>
<div class="b" style="left:357px;top:350px;width:1px;height:52px;background:#c6c6c6;"></div>
<div class="b" style="left:489px;top:327px;width:1px;height:23px;background:#a9a9a9;"></div>
<div class="b" style="left:489px;top:350px;width:1px;height:52px;background:#c6c6c6;"></div>
<div class="b" style="left:548px;top:327px;width:1px;height:23px;background:#a9a9a9;"></div>
<div class="b" style="left:548px;top:350px;width:1px;height:52px;background:#c6c6c6;"></div>
<div class="b" style="left:672px;top:327px;width:1px;height:23px;background:#a9a9a9;"></div>
<div class="b" style="left:672px;top:350px;width:1px;height:52px;background:#c6c6c6;"></div>
<div class="b" style="left:751px;top:327px;width:1px;height:23px;background:#a9a9a9;"></div>
<div class="b" style="left:751px;top:350px;width:1px;height:52px;background:#c6c6c6;"></div>
<div class="b" style="left:828px;top:327px;width:1px;height:23px;background:#a9a9a9;"></div>
<div class="b" style="left:828px;top:350px;width:1px;height:52px;background:#c6c6c6;"></div>
<div class="b" style="left:952px;top:327px;width:1px;height:23px;background:#a9a9a9;"></div>
<div class="b" style="left:952px;top:350px;width:1px;height:52px;background:#c6c6c6;"></div>
<div class="b" style="left:1062px;top:327px;width:1px;height:23px;background:#a9a9a9;"></div>
<div class="b" style="left:1062px;top:350px;width:1px;height:52px;background:#c6c6c6;"></div>
<div class="b" style="left:1162px;top:327px;width:1px;height:23px;background:#a9a9a9;"></div>
<div class="b" style="left:1162px;top:350px;width:1px;height:52px;background:#c6c6c6;"></div>
<span class="t" style="left:41.80px;top:328.00px;font-size:13px;font-weight:700;letter-spacing:-0.225px;">Hàng hóa</span>
<span class="t" style="left:361.80px;top:328.00px;font-size:13px;font-weight:700;letter-spacing:-0.427px;">Nội dung</span>
<span class="t" style="left:493.80px;top:328.00px;font-size:13px;font-weight:700;letter-spacing:0.019px;">ĐVT</span>
<span class="t" style="left:552.80px;top:328.00px;font-size:13px;font-weight:700;letter-spacing:0.364px;">Dài/m</span>
<span class="t" style="left:676.80px;top:328.00px;font-size:13px;font-weight:700;letter-spacing:-0.053px;">Rộng/m</span>
<span class="t" style="left:755.80px;top:328.00px;font-size:13px;font-weight:700;letter-spacing:-0.089px;">Số lượng</span>
<span class="t" style="left:832.80px;top:328.00px;font-size:13px;font-weight:700;letter-spacing:-0.268px;">Khối lượng</span>
<span class="t" style="left:956.80px;top:328.00px;font-size:13px;font-weight:700;letter-spacing:-0.231px;">Đơn giá</span>
<span class="t" style="left:1066.80px;top:328.00px;font-size:13px;font-weight:700;letter-spacing:-0.190px;">Thành tiền</span>
<span class="t" style="left:1166.80px;top:328.00px;font-size:13px;font-weight:700;letter-spacing:0.036px;">Công thức</span>
<svg style="left:14px;top:358px" width="5" height="9" viewBox="0 0 5 9"><path d="M0 0L4.5 4.5L0 9Z" fill="#000"/></svg>
<span class="t" style="left:21.80px;top:354.00px;font-size:13px;font-weight:700;font-family:DejaVu Sans,Liberation Sans,sans-serif;letter-spacing:-0.147px;">1</span>
<span class="t" style="left:41.80px;top:353.00px;font-size:14px;font-weight:700;font-family:DejaVu Sans,Liberation Sans,sans-serif;color:#ff0000;letter-spacing:-0.305px;">B32, Bạt hiflex 3.2zem</span>
<svg style="left:345px;top:361px" width="7" height="4" viewBox="0 0 7 4"><path d="M0 0H7L3.5 4Z" fill="#000"/></svg>
<span class="t" style="left:493.80px;top:353.00px;font-size:14px;font-family:DejaVu Sans,Liberation Sans,sans-serif;letter-spacing:0.177px;">m2</span>
<span class="t" style="left:655.10px;top:353.00px;font-size:14px;font-family:DejaVu Sans,Liberation Sans,sans-serif;letter-spacing:-0.230px;">1.</span>
<span class="t" style="left:734.10px;top:353.00px;font-size:14px;font-family:DejaVu Sans,Liberation Sans,sans-serif;letter-spacing:-0.230px;">1.</span>
<span class="t" style="left:804.10px;top:353.00px;font-size:14px;letter-spacing:0.290px;">10.</span>
<span class="t" style="left:927.10px;top:353.00px;font-size:14px;letter-spacing:0.290px;">10.</span>
<span class="t" style="left:1001.10px;top:353.00px;font-size:14px;letter-spacing:0.103px;">700,000.</span>
<span class="t" style="left:1074.10px;top:353.00px;font-size:14px;font-weight:700;font-family:DejaVu Sans,Liberation Sans,sans-serif;letter-spacing:0.074px;">7,000,000.</span>
<span class="t" style="left:1166.80px;top:353.00px;font-size:14px;font-family:DejaVu Sans,Liberation Sans,sans-serif;letter-spacing:-0.231px;">SL x DG</span>
<svg style="left:12px;top:385px" width="7" height="7" viewBox="0 0 7 7" stroke="#000" stroke-width="0.9"><path d="M3.5 0V7M0 3.5H7M1 1L6 6M6 1L1 6"/></svg>
<div class="b" style="left:23px;top:388px;width:4px;height:1px;background:#000;"></div>
<div class="b" style="left:29px;top:385px;width:1px;height:2px;background:#000;"></div>
<div class="b" style="left:29px;top:390px;width:2px;height:2px;background:#000;"></div>
<span class="t" style="left:6.80px;top:925.00px;font-size:14px;letter-spacing:0.211px;">Tổng cộng</span>
<div class="b" style="left:95px;top:922px;width:107px;height:25px;background:#f4f4f4;border:1px solid #a6a6a6;"></div>
<span class="t" style="left:127.10px;top:924.00px;font-size:14px;font-weight:700;color:#ff0000;">7,000,000</span>
<div class="b" style="left:206px;top:922px;width:863px;height:25px;background:#f4f4f4;border:1px solid #a6a6a6;"></div>
<span class="t" style="left:209.80px;top:924.00px;font-size:14px;letter-spacing:-0.139px;">Bảy triệu đồng</span>
<span class="t" style="left:1076.80px;top:925.00px;font-size:14px;letter-spacing:0.197px;">Trọng lượng (Kg)</span>
<div class="b" style="left:1188px;top:922px;width:105px;height:25px;background:#f4f4f4;border:1px solid #a6a6a6;"></div>
<span class="t" style="left:1276.10px;top:924.00px;font-size:14px;font-weight:700;color:#0000ff;letter-spacing:-0.331px;">0.</span>
<div class="b" style="left:1297px;top:236px;width:0;height:715px;border-left:1px dashed #cfcfcf"></div>
<div class="b h" style="left:2px;top:952px;width:808px;height:52px;border:1px solid #b0b0b0;border-right:none;border-left:none;"></div>
<div class="b" style="left:2px;top:1005px;width:808px;height:1px;background:#b0b0b0;"></div>
<div class="b" style="left:810px;top:951px;width:488px;height:0;border-top:1px dashed #cfcfcf"></div>
<span class="t" style="left:46.80px;top:968.00px;font-size:14px;font-weight:700;color:#0000ff;letter-spacing:0.107px;">LƯU (F2)</span>
<span class="t" style="left:164.80px;top:968.00px;font-size:14px;font-weight:700;color:#0000ff;letter-spacing:0.242px;">IN NÓNG (F4)</span>
<span class="t" style="left:310.80px;top:968.00px;font-size:14px;font-weight:700;color:#0000ff;letter-spacing:0.251px;">IN A5 (F5)</span>
<span class="t" style="left:431.80px;top:968.00px;font-size:14px;font-weight:700;color:#0000ff;letter-spacing:0.351px;">IN A4 (F6)</span>
<span class="t" style="left:544.80px;top:968.00px;font-size:14px;font-weight:700;color:#0000ff;letter-spacing:0.210px;">QUY CÁCH</span>
<span class="t" style="left:649.80px;top:968.00px;font-size:14px;font-weight:700;font-family:DejaVu Sans,Liberation Sans,sans-serif;letter-spacing:-0.366px;">XEM IN</span>
<span class="t" style="left:750.80px;top:968.00px;font-size:14px;font-weight:700;font-family:DejaVu Sans,Liberation Sans,sans-serif;color:#ff0000;letter-spacing:-0.439px;">THOÁT</span>
<div class="b" style="left:118px;top:959px;width:0;height:38px;border-left:1px dashed #c6c6c6"></div>
<div class="b" style="left:515px;top:959px;width:0;height:38px;border-left:1px dashed #c6c6c6"></div>
<div class="b" style="left:530px;top:971px;width:13px;height:13px;background:#fff;border:1px solid #b0b0b0;"></div>
<div class="b" style="left:636px;top:971px;width:13px;height:13px;background:#fff;border:1px solid #b0b0b0;"></div>
<svg style="left:636px;top:968px" width="14" height="16" viewBox="0 0 14 16" fill="none" stroke="#000" stroke-width="1.7"><path d="M2 9.6L5.8 14.4L12.6 2.4"/></svg>
<svg style="left:13px;top:962px" width="31" height="30" viewBox="0 0 31 30"><defs><linearGradient id="sv1" x1="0" y1="0" x2="1" y2="1"><stop offset="0" stop-color="#7787a6"/><stop offset="0.5" stop-color="#4d5b7a"/><stop offset="1" stop-color="#333f5c"/></linearGradient><linearGradient id="sv2" x1="0" y1="0" x2="0" y2="1"><stop offset="0" stop-color="#c2e97a"/><stop offset="0.5" stop-color="#8dc63f"/><stop offset="1" stop-color="#5f9e22"/></linearGradient></defs><rect x="1.4" y="5.2" width="23.4" height="23.4" rx="1.6" fill="url(#sv1)" stroke="#2f3a55" stroke-width="0.7"/><rect x="5" y="5.6" width="2.2" height="8.4" fill="#2c3650"/><rect x="7.4" y="5.6" width="11.4" height="8.2" fill="#dde6f3"/><rect x="5.8" y="19.6" width="15.2" height="8.6" fill="#f4f6fb"/><rect x="5.8" y="26" width="15.2" height="2.2" fill="#4f97d8"/><path d="M14.4 5.4h7V0.6l8 7.8l-8 7.8v-4.8h-7z" fill="url(#sv2)" stroke="#4c8a1a" stroke-width="0.8" stroke-linejoin="round"/></svg>
<svg style="left:128px;top:963px" width="31" height="30" viewBox="0 0 31 30"><defs><linearGradient id="pr1" x1="0" y1="0" x2="0" y2="1"><stop offset="0" stop-color="#e8eef8"/><stop offset="1" stop-color="#9fb2d3"/></linearGradient><radialGradient id="pq1" cx="0.4" cy="0.3" r="0.8"><stop offset="0" stop-color="#c6f060"/><stop offset="1" stop-color="#4d9a16"/></radialGradient></defs><rect x="6" y="3" width="15" height="10" fill="#fff" stroke="#9aa7be" stroke-width="0.8"/><path d="M3 11H25Q27 11 27 13V22Q27 24 25 24H3Q1 24 1 22V13Q1 11 3 11Z" fill="url(#pr1)" stroke="#7d8fb3" stroke-width="0.8"/><path d="M4.6 12H23.4V15Q23.4 17.4 21 17.4H7Q4.6 17.4 4.6 15Z" fill="#46536f"/><path d="M5.4 12H22.6V13.6H5.4Z" fill="#6d7a96"/><rect x="6" y="19" width="16" height="9.5" fill="#fff" stroke="#8ea0c2" stroke-width="0.8"/><rect x="8" y="22" width="12" height="4" fill="#6fa5de"/><circle cx="23.5" cy="7.5" r="7" fill="url(#pq1)" stroke="#3f7f12" stroke-width="0.7"/><text x="23.5" y="11.2" font-family="DejaVu Sans,Liberation Sans,sans-serif" font-weight="700" font-size="10" text-anchor="middle" fill="#1e4d08">?</text></svg>
<svg style="left:274px;top:963px" width="31" height="30" viewBox="0 0 31 30"><defs><linearGradient id="pr2" x1="0" y1="0" x2="0" y2="1"><stop offset="0" stop-color="#e8eef8"/><stop offset="1" stop-color="#9fb2d3"/></linearGradient><radialGradient id="pq2" cx="0.4" cy="0.3" r="0.8"><stop offset="0" stop-color="#c6f060"/><stop offset="1" stop-color="#4d9a16"/></radialGradient></defs><rect x="6" y="3" width="15" height="10" fill="#fff" stroke="#9aa7be" stroke-width="0.8"/><path d="M3 11H25Q27 11 27 13V22Q27 24 25 24H3Q1 24 1 22V13Q1 11 3 11Z" fill="url(#pr2)" stroke="#7d8fb3" stroke-width="0.8"/><path d="M4.6 12H23.4V15Q23.4 17.4 21 17.4H7Q4.6 17.4 4.6 15Z" fill="#46536f"/><path d="M5.4 12H22.6V13.6H5.4Z" fill="#6d7a96"/><rect x="6" y="19" width="16" height="9.5" fill="#fff" stroke="#8ea0c2" stroke-width="0.8"/><rect x="8" y="22" width="12" height="4" fill="#6fa5de"/><circle cx="23.5" cy="7.5" r="7" fill="url(#pq2)" stroke="#3f7f12" stroke-width="0.7"/><text x="23.5" y="11.2" font-family="DejaVu Sans,Liberation Sans,sans-serif" font-weight="700" font-size="10" text-anchor="middle" fill="#1e4d08">?</text></svg>
<svg style="left:396px;top:963px" width="31" height="30" viewBox="0 0 31 30"><defs><linearGradient id="pr3" x1="0" y1="0" x2="0" y2="1"><stop offset="0" stop-color="#e8eef8"/><stop offset="1" stop-color="#9fb2d3"/></linearGradient><radialGradient id="pq3" cx="0.4" cy="0.3" r="0.8"><stop offset="0" stop-color="#c6f060"/><stop offset="1" stop-color="#4d9a16"/></radialGradient></defs><rect x="6" y="3" width="15" height="10" fill="#fff" stroke="#9aa7be" stroke-width="0.8"/><path d="M3 11H25Q27 11 27 13V22Q27 24 25 24H3Q1 24 1 22V13Q1 11 3 11Z" fill="url(#pr3)" stroke="#7d8fb3" stroke-width="0.8"/><path d="M4.6 12H23.4V15Q23.4 17.4 21 17.4H7Q4.6 17.4 4.6 15Z" fill="#46536f"/><path d="M5.4 12H22.6V13.6H5.4Z" fill="#6d7a96"/><rect x="6" y="19" width="16" height="9.5" fill="#fff" stroke="#8ea0c2" stroke-width="0.8"/><rect x="8" y="22" width="12" height="4" fill="#6fa5de"/><circle cx="23.5" cy="7.5" r="7" fill="url(#pq3)" stroke="#3f7f12" stroke-width="0.7"/><text x="23.5" y="11.2" font-family="DejaVu Sans,Liberation Sans,sans-serif" font-weight="700" font-size="10" text-anchor="middle" fill="#1e4d08">?</text></svg>
<svg style="left:717px;top:964px" width="28" height="28" viewBox="0 0 28 28"><defs><linearGradient id="rx" x1="0" y1="0" x2="0" y2="1"><stop offset="0" stop-color="#f08070"/><stop offset="0.5" stop-color="#dd4636"/><stop offset="1" stop-color="#b82418"/></linearGradient></defs><path d="M5.2 5.6L22.8 22.4M22.8 5.6L5.2 22.4" stroke="#a8261a" stroke-width="7.4" stroke-linecap="round" fill="none"/><path d="M5.2 5.6L22.8 22.4M22.8 5.6L5.2 22.4" stroke="url(#rx)" stroke-width="6" stroke-linecap="round" fill="none"/></svg>
<div class="b" style="left:0;top:1013px;width:1920px;height:0;border-top:1px dashed #cfcfcf"></div>
<span class="t" style="left:7.80px;top:1019.00px;font-size:11px;font-weight:700;letter-spacing:0.070px;">Chào mừng: Administrator đến với phần mềm MekongSoft</span>
<div class="b" style="left:349px;top:1021px;width:1px;height:12px;background:#b9c4d0;"></div>
<span class="t" style="left:362.80px;top:1018.00px;font-size:11px;font-weight:700;letter-spacing:-0.105px;">Version: 4.4.0</span>
<div class="b" style="left:452px;top:1021px;width:1px;height:12px;background:#b9c4d0;"></div>
<span class="t" style="left:465.80px;top:1018.00px;font-size:11px;font-weight:700;color:#ff0000;letter-spacing:0.083px;">Ngày: 10/10/2023 4:53:20 CH</span>
<div class="b" style="left:1613px;top:1017px;width:0;height:22px;border-left:1px dashed #cfcfcf"></div>
<span class="t" style="left:1623.80px;top:1019.00px;font-size:11px;font-weight:700;letter-spacing:-0.012px;">@2023 MekongSoft. Thông tin hỗ trợ: 0901 000 508</span>
<span class="t" style="left:1308.80px;top:221.00px;font-size:11px;font-weight:700;letter-spacing:-0.118px;">DANH SÁCH PHIẾU</span>
<div class="b" style="left:1305px;top:241px;width:1602px;height:0;border-top:1px dashed #cfcfcf;width:602px"></div>
<svg style="left:1870px;top:225px" width="9" height="10" viewBox="0 0 9 10"><path d="M2 0.8H7V6H2Z" fill="#000"/><rect x="3" y="1.8" width="1" height="4" fill="#fff"/><rect x="0.8" y="5.6" width="7.4" height="1.4" fill="#000"/><rect x="3.9" y="7" width="1.3" height="2.4" fill="#000"/></svg>
<svg style="left:1893px;top:226px;overflow:hidden" width="9.4" height="7.2" viewBox="0 0 9.4 7.2" stroke="#000" stroke-width="2.1"><path d="M-0.43 -2L9.83 9.2M9.83 -2L-0.43 9.2"/></svg>
<span class="t" style="left:1307.80px;top:247.00px;font-size:14px;letter-spacing:0.296px;">Từ ngày</span>
<span class="t" style="left:1616.80px;top:247.00px;font-size:14px;letter-spacing:0.030px;">Đến ngày</span>
<div class="b" style="left:1308px;top:271px;width:305px;height:24px;background:#fff;border:1px solid #a6a6a6;"></div>
<span class="t" style="left:1311.80px;top:273.00px;font-size:14px;letter-spacing:0.231px;">01/10/2023</span>
<svg style="left:1601px;top:281px" width="7" height="4" viewBox="0 0 7 4"><path d="M0 0H7L3.5 4Z" fill="#000"/></svg>
<div class="b" style="left:1617px;top:271px;width:288px;height:24px;background:#fff;border:1px solid #a6a6a6;"></div>
<span class="t" style="left:1620.80px;top:273.00px;font-size:14px;letter-spacing:0.231px;">10/10/2023</span>
<svg style="left:1892px;top:281px" width="7" height="4" viewBox="0 0 7 4"><path d="M0 0H7L3.5 4Z" fill="#000"/></svg>
<span class="t" style="left:1307.80px;top:303.00px;font-size:14px;letter-spacing:-0.214px;">Người lập</span>
<div class="b" style="left:1376px;top:300px;width:529px;height:24px;background:#fff;border:1px solid #a6a6a6;"></div>
<span class="t" style="left:1379.80px;top:302.00px;font-size:14px;letter-spacing:-0.302px;">Administrator</span>
<svg style="left:1873px;top:310px" width="7" height="4" viewBox="0 0 7 4"><path d="M0 0H7L3.5 4Z" fill="#000"/></svg>
<svg style="left:1886px;top:306px" width="16" height="13" viewBox="0 0 16 13" fill="#45b035"><path id="ra" d="M10.8 0.8C5.6 -0.8 1.2 2.2 1.8 6.8L-0.2 6.8L3.7 10.6L7.6 6.8L5.9 6.8C5.8 4.2 7.4 2 10.8 0.8Z"/><path d="M10.8 0.8C5.6 -0.8 1.2 2.2 1.8 6.8L-0.2 6.8L3.7 10.6L7.6 6.8L5.9 6.8C5.8 4.2 7.4 2 10.8 0.8Z" transform="rotate(180 8 6.45)"/></svg>
<div class="b h" style="left:1814px;top:329px;width:91px;height:24px;border:1px solid #a6a6a6;"></div>
<svg style="left:1819px;top:335px" width="16" height="15" viewBox="0 0 16 15" fill="none"><circle cx="5.6" cy="5.2" r="4.1" stroke="#222" stroke-width="2.1" fill="#fff"/><path d="M8.8 8.2L13.6 12.6" stroke="#222" stroke-width="3" stroke-linecap="round"/></svg>
<span class="t" style="left:1838.80px;top:332.00px;font-size:14px;font-weight:700;color:#0000ff;letter-spacing:-0.610px;">Tìm kiếm</span>
<div class="b" style="left:1308px;top:357px;width:597px;height:585px;background:#fff;border:1px solid #a9a9a9;"></div>
<div class="b h" style="left:1309px;top:908px;width:595px;height:33px;"></div>
<div class="b" style="left:1309px;top:907px;width:595px;height:1px;background:#a9a9a9;"></div>
<div class="b h" style="left:1309px;top:358px;width:595px;height:22px;"></div>
<div class="b" style="left:1309px;top:380px;width:592px;height:1px;background:#a9a9a9;"></div>
<div class="b h" style="left:1309px;top:381px;width:21px;height:140px;"></div>
<div class="b" style="left:1309px;top:408px;width:592px;height:2px;background:#a0a0a0;"></div>
<div class="b" style="left:1331px;top:410px;width:569px;height:27px;background:#00ff7f;"></div>
<div class="b" style="left:1331px;top:410px;width:91px;height:27px;background:linear-gradient(90deg,#ffff00 0%,#ffff10 12%,#ffff70 55%,#ffffdc 100%);border:1px dotted #ff0000;"></div>
<div class="b" style="left:1309px;top:437px;width:592px;height:1px;background:#c6c6c6;"></div>
<div class="b" style="left:1309px;top:465px;width:592px;height:1px;background:#c6c6c6;"></div>
<div class="b" style="left:1309px;top:493px;width:592px;height:1px;background:#c6c6c6;"></div>
<div class="b" style="left:1309px;top:521px;width:592px;height:1px;background:#c6c6c6;"></div>
<div class="b" style="left:1330px;top:358px;width:1px;height:23px;background:#a9a9a9;"></div>
<div class="b" style="left:1330px;top:381px;width:1px;height:141px;background:#a9a9a9;"></div>
<div class="b" style="left:1421px;top:358px;width:1px;height:23px;background:#a9a9a9;"></div>
<div class="b" style="left:1421px;top:381px;width:1px;height:27px;background:#c6c6c6;"></div>
<div class="b" style="left:1421px;top:438px;width:1px;height:84px;background:#c6c6c6;"></div>
<div class="b" style="left:1524px;top:358px;width:1px;height:23px;background:#a9a9a9;"></div>
<div class="b" style="left:1524px;top:381px;width:1px;height:27px;background:#c6c6c6;"></div>
<div class="b" style="left:1524px;top:438px;width:1px;height:84px;background:#c6c6c6;"></div>
<div class="b" style="left:1524px;top:410px;width:1px;height:27px;background:#6fdc9f;"></div>
<div class="b" style="left:1599px;top:358px;width:1px;height:23px;background:#a9a9a9;"></div>
<div class="b" style="left:1599px;top:381px;width:1px;height:27px;background:#c6c6c6;"></div>
<div class="b" style="left:1599px;top:438px;width:1px;height:84px;background:#c6c6c6;"></div>
<div class="b" style="left:1599px;top:410px;width:1px;height:27px;background:#6fdc9f;"></div>
<div class="b" style="left:1674px;top:358px;width:1px;height:23px;background:#a9a9a9;"></div>
<div class="b" style="left:1674px;top:381px;width:1px;height:27px;background:#c6c6c6;"></div>
<div class="b" style="left:1674px;top:438px;width:1px;height:84px;background:#c6c6c6;"></div>
<div class="b" style="left:1674px;top:410px;width:1px;height:27px;background:#6fdc9f;"></div>
<div class="b" style="left:1749px;top:358px;width:1px;height:23px;background:#a9a9a9;"></div>
<div class="b" style="left:1749px;top:381px;width:1px;height:27px;background:#c6c6c6;"></div>
<div class="b" style="left:1749px;top:438px;width:1px;height:84px;background:#c6c6c6;"></div>
<div class="b" style="left:1749px;top:410px;width:1px;height:27px;background:#6fdc9f;"></div>
<div class="b" style="left:1824px;top:358px;width:1px;height:23px;background:#a9a9a9;"></div>
<div class="b" style="left:1824px;top:381px;width:1px;height:27px;background:#c6c6c6;"></div>
<div class="b" style="left:1824px;top:438px;width:1px;height:84px;background:#c6c6c6;"></div>
<div class="b" style="left:1824px;top:410px;width:1px;height:27px;background:#6fdc9f;"></div>
<div class="b" style="left:1900px;top:358px;width:1px;height:23px;background:#a9a9a9;"></div>
<div class="b" style="left:1900px;top:381px;width:1px;height:27px;background:#c6c6c6;"></div>
<div class="b" style="left:1900px;top:438px;width:1px;height:84px;background:#c6c6c6;"></div>
<div class="b" style="left:1900px;top:410px;width:1px;height:27px;background:#6fdc9f;"></div>
<span class="t" style="left:1334.80px;top:359.00px;font-size:13px;font-weight:700;letter-spacing:-0.216px;">Ngày lập</span>
<span class="t" style="left:1425.80px;top:359.00px;font-size:13px;font-weight:700;letter-spacing:-0.335px;">Mã phiếu</span>
<span class="t" style="left:1528.80px;top:359.00px;font-size:13px;font-weight:700;letter-spacing:-0.195px;">Tổng tiền</span>
<span class="t" style="left:1603.80px;top:359.00px;font-size:13px;font-weight:700;letter-spacing:-0.385px;">Ghi chú</span>
<span class="t" style="left:1678.80px;top:359.00px;font-size:13px;font-weight:700;letter-spacing:-0.331px;">Người lập</span>
<span class="t" style="left:1753.80px;top:359.00px;font-size:13px;font-weight:700;letter-spacing:-0.120px;">Kho xuất</span>
<span class="t" style="left:1828.80px;top:359.00px;font-size:13px;font-weight:700;letter-spacing:-0.184px;">Kho nhận</span>
<svg style="left:1314px;top:391px" width="6" height="8" viewBox="0 0 6 8"><ellipse cx="2.5" cy="1.9" rx="2.5" ry="1.9" fill="#000"/><ellipse cx="2" cy="1.5" rx="0.8" ry="0.5" fill="#fff"/><rect x="1.8" y="3" width="1.5" height="4" fill="#000"/></svg>
<div class="b" style="left:1339px;top:393px;width:9px;height:1px;background:#666;"></div>
<div class="b" style="left:1339px;top:395px;width:9px;height:1px;background:#666;"></div>
<svg style="left:1427px;top:389px" width="16" height="11" viewBox="0 0 16 11"><rect x="4.4" y="0" width="6.9" height="10.8" rx="0.8" fill="#109a20"/><text x="0" y="8.2" font-family="DejaVu Sans Mono,Liberation Mono,monospace" font-weight="700" font-size="7.4" fill="#5a5a5a">A</text><text x="5.7" y="8.2" font-family="DejaVu Sans Mono,Liberation Mono,monospace" font-weight="700" font-size="7.4" fill="#fff">B</text><text x="11.6" y="8.2" font-family="DejaVu Sans Mono,Liberation Mono,monospace" font-weight="700" font-size="7.4" fill="#5a5a5a">C</text></svg>
<div class="b" style="left:1536px;top:393px;width:9px;height:1px;background:#666;"></div>
<div class="b" style="left:1536px;top:395px;width:9px;height:1px;background:#666;"></div>
<svg style="left:1605px;top:389px" width="16" height="11" viewBox="0 0 16 11"><rect x="4.4" y="0" width="6.9" height="10.8" rx="0.8" fill="#109a20"/><text x="0" y="8.2" font-family="DejaVu Sans Mono,Liberation Mono,monospace" font-weight="700" font-size="7.4" fill="#5a5a5a">A</text><text x="5.7" y="8.2" font-family="DejaVu Sans Mono,Liberation Mono,monospace" font-weight="700" font-size="7.4" fill="#fff">B</text><text x="11.6" y="8.2" font-family="DejaVu Sans Mono,Liberation Mono,monospace" font-weight="700" font-size="7.4" fill="#5a5a5a">C</text></svg>
<svg style="left:1680px;top:389px" width="16" height="11" viewBox="0 0 16 11"><rect x="4.4" y="0" width="6.9" height="10.8" rx="0.8" fill="#109a20"/><text x="0" y="8.2" font-family="DejaVu Sans Mono,Liberation Mono,monospace" font-weight="700" font-size="7.4" fill="#5a5a5a">A</text><text x="5.7" y="8.2" font-family="DejaVu Sans Mono,Liberation Mono,monospace" font-weight="700" font-size="7.4" fill="#fff">B</text><text x="11.6" y="8.2" font-family="DejaVu Sans Mono,Liberation Mono,monospace" font-weight="700" font-size="7.4" fill="#5a5a5a">C</text></svg>
<svg style="left:1755px;top:389px" width="16" height="11" viewBox="0 0 16 11"><rect x="4.4" y="0" width="6.9" height="10.8" rx="0.8" fill="#109a20"/><text x="0" y="8.2" font-family="DejaVu Sans Mono,Liberation Mono,monospace" font-weight="700" font-size="7.4" fill="#5a5a5a">A</text><text x="5.7" y="8.2" font-family="DejaVu Sans Mono,Liberation Mono,monospace" font-weight="700" font-size="7.4" fill="#fff">B</text><text x="11.6" y="8.2" font-family="DejaVu Sans Mono,Liberation Mono,monospace" font-weight="700" font-size="7.4" fill="#5a5a5a">C</text></svg>
<svg style="left:1830px;top:389px" width="16" height="11" viewBox="0 0 16 11"><rect x="4.4" y="0" width="6.9" height="10.8" rx="0.8" fill="#109a20"/><text x="0" y="8.2" font-family="DejaVu Sans Mono,Liberation Mono,monospace" font-weight="700" font-size="7.4" fill="#5a5a5a">A</text><text x="5.7" y="8.2" font-family="DejaVu Sans Mono,Liberation Mono,monospace" font-weight="700" font-size="7.4" fill="#fff">B</text><text x="11.6" y="8.2" font-family="DejaVu Sans Mono,Liberation Mono,monospace" font-weight="700" font-size="7.4" fill="#5a5a5a">C</text></svg>
<svg style="left:1315px;top:419px" width="5" height="9" viewBox="0 0 5 9"><path d="M0 0L4.5 4.5L0 9Z" fill="#000"/></svg>
<span class="t" style="left:1335.80px;top:413.00px;font-size:14px;font-weight:700;font-family:DejaVu Sans,Liberation Sans,sans-serif;color:#ff0000;letter-spacing:-0.340px;">10/10/20...</span>
<span class="t" style="left:1425.80px;top:413.00px;font-size:14px;font-weight:700;color:#0000ff;letter-spacing:0.079px;">NCK00004-...</span>
<span class="t" style="left:1530.10px;top:413.00px;font-size:14px;font-weight:700;color:#0000ff;letter-spacing:-0.185px;">7,000,0...</span>
<span class="t" style="left:1678.80px;top:413.00px;font-size:14px;font-weight:700;color:#0000ff;letter-spacing:-0.444px;">Adminis...</span>
<span class="t" style="left:1753.80px;top:413.00px;font-size:14px;font-weight:700;color:#0000ff;letter-spacing:-0.019px;">Trụ Sở ...</span>
<span class="t" style="left:1828.80px;top:413.00px;font-size:14px;font-weight:700;color:#0000ff;letter-spacing:-0.005px;">Kho Phụ</span>
<span class="t" style="left:1334.80px;top:441.00px;font-size:14px;letter-spacing:0.131px;">10/10/2023</span>
<span class="t" style="left:1425.80px;top:441.00px;font-size:14px;letter-spacing:-0.015px;">NCK00003-1...</span>
<span class="t" style="left:1532.10px;top:441.00px;font-size:14px;letter-spacing:-0.022px;">7,000,000</span>
<span class="t" style="left:1678.80px;top:441.00px;font-size:14px;letter-spacing:-0.293px;">Administ...</span>
<span class="t" style="left:1753.80px;top:441.00px;font-size:14px;letter-spacing:0.237px;">Trụ Sở C...</span>
<span class="t" style="left:1828.80px;top:441.00px;font-size:14px;letter-spacing:0.198px;">Kho Phụ</span>
<span class="t" style="left:1334.80px;top:469.00px;font-size:14px;letter-spacing:0.131px;">10/10/2023</span>
<span class="t" style="left:1425.80px;top:469.00px;font-size:14px;letter-spacing:-0.015px;">NCK00002-1...</span>
<span class="t" style="left:1532.10px;top:469.00px;font-size:14px;letter-spacing:-0.022px;">1,400,000</span>
<span class="t" style="left:1678.80px;top:469.00px;font-size:14px;letter-spacing:-0.293px;">Administ...</span>
<span class="t" style="left:1753.80px;top:469.00px;font-size:14px;letter-spacing:0.237px;">Trụ Sở C...</span>
<span class="t" style="left:1828.80px;top:469.00px;font-size:14px;letter-spacing:0.198px;">Kho Phụ</span>
<span class="t" style="left:1334.80px;top:497.00px;font-size:14px;letter-spacing:0.131px;">10/10/2023</span>
<span class="t" style="left:1425.80px;top:497.00px;font-size:14px;letter-spacing:-0.015px;">NCK00001-1...</span>
<span class="t" style="left:1543.60px;top:497.00px;font-size:14px;letter-spacing:0.046px;">800,000</span>
<span class="t" style="left:1678.80px;top:497.00px;font-size:14px;letter-spacing:-0.293px;">Administ...</span>
<span class="t" style="left:1753.80px;top:497.00px;font-size:14px;letter-spacing:0.237px;">Trụ Sở C...</span>
<span class="t" style="left:1828.80px;top:497.00px;font-size:14px;letter-spacing:0.198px;">Kho Phụ</span>
<div class="b" style="left:1303px;top:218px;width:610px;height:734px;border:3px solid rgba(0,0,0,.30);filter:blur(2.5px)"></div>
<div class="b" style="left:1302px;top:215px;width:610px;height:733px;border:2px solid #8e9393"></div>
<div class="b" style="left:1300px;top:213px;width:610px;height:733px;border:2px solid #ff3636"></div>
<svg style="left:1400px;top:90px;filter:drop-shadow(2px 3px 2px rgba(0,0,0,.45))" width="410" height="140" viewBox="1400 90 410 140"><rect x="1517" y="101" width="275" height="74" rx="5" fill="#fff" stroke="#000" stroke-width="2"/><path d="M1540 176L1421 213.9" stroke="#000" stroke-width="2" fill="none"/><path d="M1417.6 215L1425 209.6L1426.8 215Z" fill="#000"/></svg>
<span class="t" style="left:1529.80px;top:128.00px;font-size:16px;font-family:Liberation Sans,sans-serif;color:#1a1a1a;letter-spacing:-0.374px;">1.Danh sách phiếu nhập chuyển kho</span>
<svg style="left:1383px;top:650px" width="14" height="21" viewBox="0 0 14 21"><path d="M0.5 1.4V16.9Q0.5 17.8 1.5 17.2L4.6 14.4L6.6 19.1Q7.2 20.1 8.3 19.6Q9.6 19 9.2 18L7.3 13.5H11.2Q12.3 13.4 11.4 12.4Z" fill="#fff" stroke="#1a1a2a" stroke-width="1" stroke-linejoin="round"/></svg>
</body></html>
